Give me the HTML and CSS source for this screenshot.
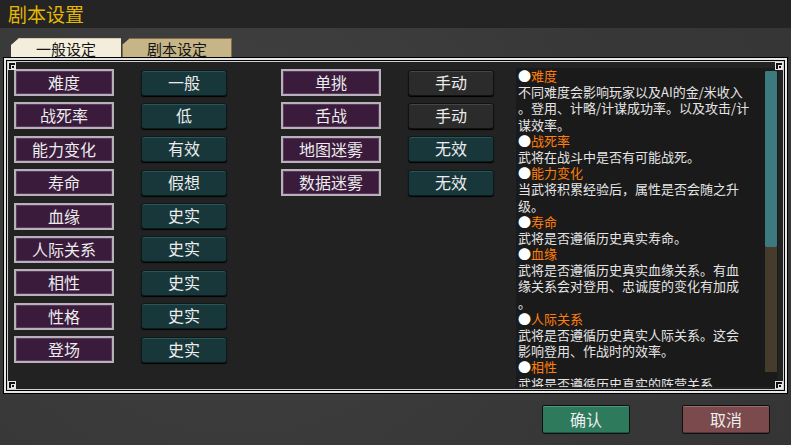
FILE: index.html
```html
<!DOCTYPE html>
<html lang="zh">
<head>
<meta charset="utf-8">
<link rel="stylesheet" href="styles.css">
</head>
<body>
<div class="app">
  <div class="titlebar">剧本设置</div>
  <div class="tabs">
    <div class="tab tab-active">一般设定</div>
    <div class="tab tab-other">剧本设定</div>
  </div>
  <div class="panel">
    <span class="corner c-tl"></span><span class="corner c-tr"></span>
    <span class="corner c-bl"></span><span class="corner c-br"></span>
    <div class="settings">
      <div class="grid">
        <div class="lbl">难度</div><div class="val">一般</div>
        <div class="lbl">战死率</div><div class="val">低</div>
        <div class="lbl">能力变化</div><div class="val">有效</div>
        <div class="lbl">寿命</div><div class="val">假想</div>
        <div class="lbl">血缘</div><div class="val">史实</div>
        <div class="lbl">人际关系</div><div class="val">史实</div>
        <div class="lbl">相性</div><div class="val">史实</div>
        <div class="lbl">性格</div><div class="val">史实</div>
        <div class="lbl">登场</div><div class="val">史实</div>
      </div>
      <div class="grid">
        <div class="lbl">单挑</div><div class="val val-gray">手动</div>
        <div class="lbl">舌战</div><div class="val val-gray">手动</div>
        <div class="lbl">地图迷雾</div><div class="val">无效</div>
        <div class="lbl">数据迷雾</div><div class="val">无效</div>
      </div>
    </div>
    <div class="desc">
      <div class="desc-text">
        <div class="ln h">●<span>难度</span></div>
        <div class="ln">不同难度会影响玩家以及AI的金/米收入</div>
        <div class="ln">。登用、计略/计谋成功率。以及攻击/计</div>
        <div class="ln">谋效率。</div>
        <div class="ln h">●<span>战死率</span></div>
        <div class="ln">武将在战斗中是否有可能战死。</div>
        <div class="ln h">●<span>能力变化</span></div>
        <div class="ln">当武将积累经验后，属性是否会随之升</div>
        <div class="ln">级。</div>
        <div class="ln h">●<span>寿命</span></div>
        <div class="ln">武将是否遵循历史真实寿命。</div>
        <div class="ln h">●<span>血缘</span></div>
        <div class="ln">武将是否遵循历史真实血缘关系。有血</div>
        <div class="ln">缘关系会对登用、忠诚度的变化有加成</div>
        <div class="ln">。</div>
        <div class="ln h">●<span>人际关系</span></div>
        <div class="ln">武将是否遵循历史真实人际关系。这会</div>
        <div class="ln">影响登用、作战时的效率。</div>
        <div class="ln h">●<span>相性</span></div>
        <div class="ln">武将是否遵循历史真实的阵营关系</div>
      </div>
      <div class="scroll"><div class="thumb"></div></div>
    </div>
  </div>
  <div class="footer">
    <div class="btn btn-ok">确认</div>
    <div class="btn btn-cancel">取消</div>
  </div>
</div>
</body>
</html>
```
FILE: styles.css
```css
* { box-sizing: border-box; }
html, body { margin: 0; padding: 0; }
body {
  width: 791px; height: 445px; overflow: hidden;
  font-family: "Noto Sans CJK SC", "Noto Sans", sans-serif;
  background: #3a3a3a;
}
.app {
  width: 791px; height: 445px;
  background: radial-gradient(circle at 30% 40%, #404040 0%, #383838 60%, #353535 100%);
  display: flex; flex-direction: column;
}
.titlebar {
  height: 28px; background: #242424;
  color: #e6b800; font-size: 19px; line-height: 27px;
  padding-left: 8px;
}
.tabs {
  display: flex; padding: 10px 0 0 11px; height: 30px; gap: 1px;
}
.tab {
  width: 110px; height: 20px; font-size: 15px; line-height: 19px;
  text-align: center; color: #151515;
  clip-path: polygon(8px 0, 100% 0, 100% 100%, 0 100%, 0 7px);
}
.tab-active { background: #f3eddc; border-top: 1px solid #d8cdb0; }
.tab-other { background: #c6b586; border: 1px solid #8c6a48; border-bottom: none; }

.panel {
  position: relative;
  margin-left: 4px; width: 783px; height: 335px;
  background: #222222;
  border: 2px solid #e6e6e6;
  box-shadow: inset 0 0 0 1px #000, inset 0 0 0 2px #cfcfcf, 0 0 0 1px #000;
  display: flex; padding: 8px 0 0 8px;
}
.corner {
  position: absolute; width: 8px; height: 8px;
  border: 1px solid #e6e6e6; background: #111;
}
.corner::after {
  content: ""; position: absolute; left: 2px; top: 2px;
  width: 2px; height: 2px; border: 1px solid #e6e6e6;
}
.c-tl { left: 2px; top: 2px; }
.c-tr { right: 2px; top: 2px; }
.c-bl { left: 2px; bottom: 2px; }
.c-br { right: 2px; bottom: 2px; }

.settings { display: flex; gap: 54px; width: 502px; }
.grid {
  display: grid;
  grid-template-columns: 100px 86px;
  column-gap: 27px; row-gap: 6.4px;
  align-content: start; align-items: center;
  padding-top: 1px;
}
.lbl {
  height: 27px; background: #3a1b3c;
  border: 2px solid #b9b1b9;
  box-shadow: inset 0 0 0 1px #5a3a5c;
  color: #ececec; font-size: 16px; line-height: 22px; text-align: center;
}
.val {
  height: 26px; background: #17373a;
  border: 1px solid #0b1a1b; border-radius: 3px;
  box-shadow: inset 0 1px 0 #2c5558, 0 1px 1px #000;
  color: #ececec; font-size: 16px; line-height: 23px; text-align: center;
}
.val-gray { background: #2b2b2b; box-shadow: inset 0 1px 0 #454545, 0 1px 1px #000; border-color: #111; }

.desc {
  width: 262px; height: 319px;
  background: #1a1a1a;
  display: flex; overflow: hidden;
}
.desc-text {
  flex: 1; padding: 0 0 0 2px;
  color: #e4e4e4; font-size: 13px;
  white-space: nowrap; overflow: hidden;
}
.ln { height: 16.2px; line-height: 16.2px; overflow: visible; }
.desc-text .h { color: #ffffff; }
.desc-text .h span { color: #ff7f0a; }
.scroll {
  width: 12px; margin: 3px 1px 15px 0;
  background: #463c2b; display: flex; flex-direction: column;
}
.thumb { height: 176px; background: #3c7a80; border-radius: 2px; }

.footer {
  display: flex; padding: 12px 0 0 542px; gap: 52px;
}
.btn {
  width: 88px; height: 29px;
  color: #eeeeee; font-size: 16px; line-height: 26px; text-align: center;
  border: 1px solid #0f0f0f; border-radius: 2px;
}
.btn-ok { background: #2d7a5d; box-shadow: inset 0 1px 0 #4a9a7c, inset 0 -1px 0 #1c5540; }
.btn-cancel { background: #7b4a4c; box-shadow: inset 0 1px 0 #9a6a6c, inset 0 -1px 0 #553234; }
```
